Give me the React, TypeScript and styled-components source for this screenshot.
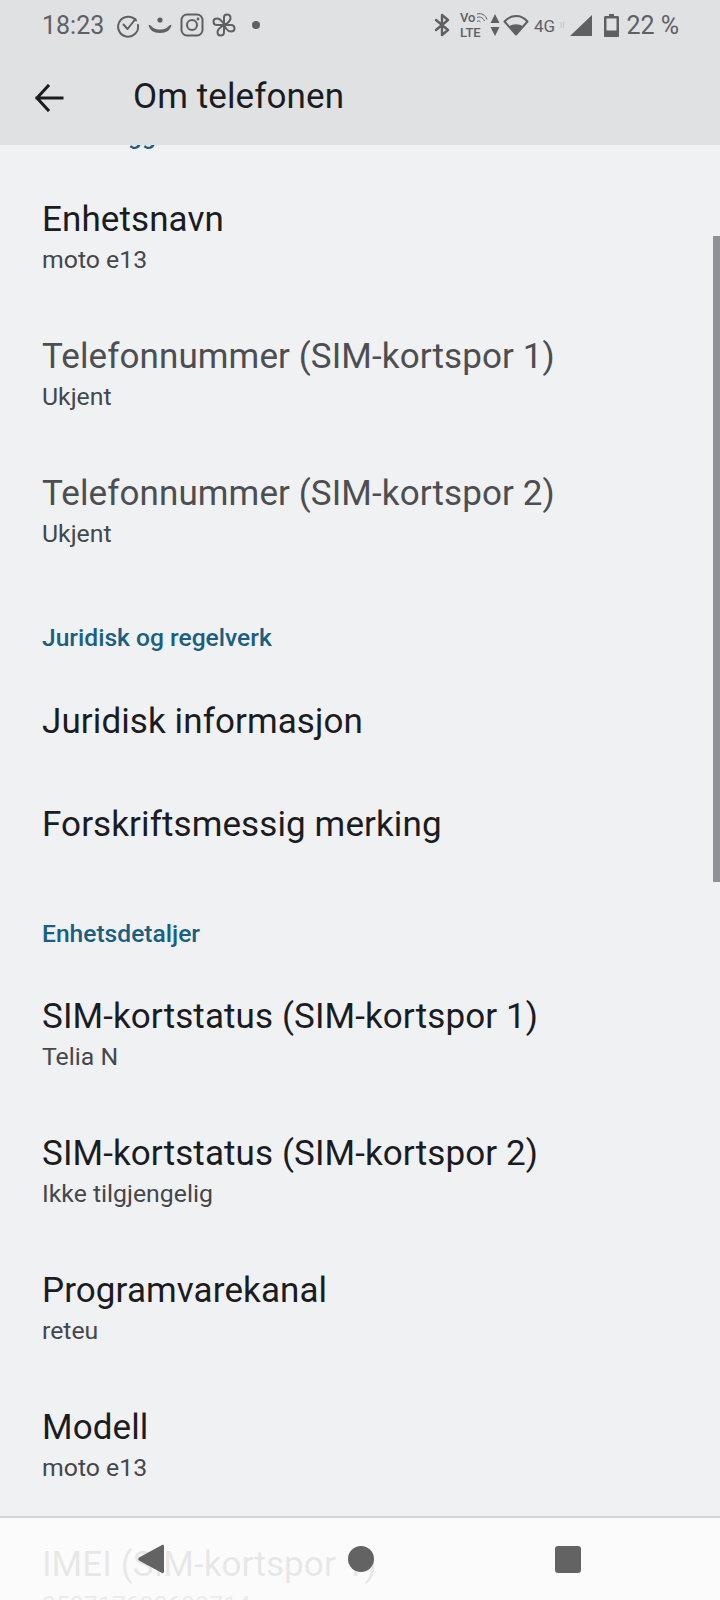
import React from 'react';
import styled, { createGlobalStyle } from 'styled-components';

const GlobalStyle = createGlobalStyle`
  html, body {
    margin: 0;
    padding: 0;
    background: #f0f1f3;
  }
  body {
    font-family: Roboto, "Liberation Sans", sans-serif;
  }
`;

const SPage = styled.div`
  position: relative;
  width: 720px;
  height: 1600px;
  display: flex;
  flex-direction: column;
  overflow: hidden;
  background: #f0f1f3;
`;

const SHeader = styled.header`
  height: 145px;
  flex: none;
  background: #e0e1e3;
  display: flex;
  flex-direction: column;
  position: relative;
  z-index: 1;
`;

const SStatusBar = styled.div`
  height: 50px;
  flex: none;
  padding: 0 41px 0 42px;
  display: flex;
  align-items: center;
  justify-content: space-between;
  color: #5f6063;
`;

const SStatusGroup = styled.div`
  display: flex;
  align-items: center;
`;

const STime = styled.span`
  font-size: 25px;
  margin-right: 11px;
`;

const SPercent = styled.span`
  font-size: 25px;
  margin-left: 7px;
`;

const SToolbar = styled.div`
  flex: 1;
  display: flex;
  align-items: center;
  padding-left: 34px;
`;

const STitle = styled.h1`
  margin: 0 0 2px 69px;
  font-size: 35px;
  letter-spacing: 0.1px;
  font-weight: 400;
  color: #1b1c1f;
`;

const SScroller = styled.main`
  flex: 1;
  overflow: hidden;
`;

const SList = styled.div`
  margin-top: -23px;
`;

const SCategory = styled.div<{ $first?: boolean }>`
  height: 28px;
  line-height: 28px;
  margin: ${({ $first }) => ($first ? '0 0 19px' : '44px 0 18px')} 42px;
  font-size: 24.6px;
  font-weight: 500;
  color: #1a5f82;
`;

const SRow = styled.div<{ $plain?: boolean }>`
  height: ${({ $plain }) => ($plain ? '103px' : '137px')};
  padding-left: 42px;
  display: flex;
  flex-direction: column;
  justify-content: center;
`;

const SRowTitle = styled.div<{ $muted?: boolean }>`
  font-size: 35px;
  letter-spacing: 0.1px;
  line-height: 44px;
  color: ${({ $muted }) => ($muted ? '#4c4e52' : '#1b1c1f')};
`;

const SRowValue = styled.div`
  font-size: 24.8px;
  line-height: 35px;
  color: #44474b;
`;

const SScrollThumb = styled.div`
  position: absolute;
  top: 236px;
  right: 0;
  width: 7px;
  height: 646px;
  background: #8f9194;
`;

const SNavBar = styled.nav`
  position: absolute;
  left: 0;
  right: 0;
  bottom: 0;
  height: 82px;
  border-top: 2px solid #d3d4d6;
  background: rgba(252, 252, 252, 0.91);
  display: flex;
  align-items: center;
  padding-left: 138px;
  z-index: 2;
`;

const SNavBack = styled.svg`
  width: 26px;
  height: 30px;
  fill: #636363;
`;

const SNavHome = styled.span`
  width: 26px;
  height: 26px;
  margin-left: 184px;
  border-radius: 50%;
  background: #636363;
`;

const SNavRecent = styled.span`
  width: 26px;
  height: 27px;
  margin-left: 181px;
  border-radius: 3px;
  background: #636363;
`;

const SIcon = styled.svg<{ $width: number; $gap?: number }>`
  width: ${({ $width }) => $width}px;
  height: 24px;
  margin-right: ${({ $gap }) => $gap ?? 0}px;
  flex: none;
  overflow: visible;
`;

const stroke = {
  fill: 'none',
  stroke: '#5f6063',
  strokeWidth: 2,
  strokeLinecap: 'round',
  strokeLinejoin: 'round',
} as const;

const rows = {
  top: [
    { title: 'Enhetsnavn', value: 'moto e13' },
    { title: 'Telefonnummer (SIM-kortspor 1)', value: 'Ukjent', muted: true },
    { title: 'Telefonnummer (SIM-kortspor 2)', value: 'Ukjent', muted: true },
  ],
  legal: ['Juridisk informasjon', 'Forskriftsmessig merking'],
  details: [
    { title: 'SIM-kortstatus (SIM-kortspor 1)', value: 'Telia N' },
    { title: 'SIM-kortstatus (SIM-kortspor 2)', value: 'Ikke tilgjengelig' },
    { title: 'Programvarekanal', value: 'reteu' },
    { title: 'Modell', value: 'moto e13' },
    { title: 'IMEI (SIM-kortspor 1)', value: '350717680699714' },
  ],
};

const NotificationIcons = () => (
  <>
    <SIcon $width={24} $gap={7} viewBox="0 0 24 24" style={{ marginLeft: 1 }}>
      <path {...stroke} d="M20 7.500A10 10 0 1 0 22 12" />
      <path {...stroke} d="M7.500 11.500l4 4.500 8-10" />
    </SIcon>
    <SIcon $width={26} $gap={7} viewBox="0 0 25 24">
      <circle cx="12.500" cy="7" r="2.600" fill="#5f6063" />
      <path d="M1 12c3 0 3 2 5 3 4 2 9 2 13 0 2-1 2-3 5-3-1 5-5 8-11.500 8S2 17 1 12z" fill="#5f6063" />
    </SIcon>
    <SIcon $width={24} $gap={8} viewBox="0 0 24 24">
      <rect {...stroke} x="1.500" y="1.500" width="21" height="21" rx="5.500" />
      <circle {...stroke} cx="12" cy="12" r="5" />
      <circle cx="18" cy="6" r="1.400" fill="#5f6063" />
    </SIcon>
    <SIcon $width={24} $gap={15} viewBox="0 0 24 24">
      <path
        {...stroke}
        d="M12 11V4.500C12 2.500 13.500 1.500 15 1.500c2 0 3.500 1.500 3.500 3.500S17 9 15 10.500L12 12h7c2 0 3.500 1.500 3.500 3.500S21 18.500 19 18.500c-2 0-3.500-1-5-3L12 12v7c0 2-1.500 3.500-3.500 3.500S5.500 21 5.500 19c0-2 1.500-3.500 3.500-5L12 12H5C3 12 1.500 10.500 1.500 8.500S3 5.500 5 5.500c2 0 3.500 1 5 3z"
      />
    </SIcon>
    <SIcon $width={10} viewBox="0 0 10 24">
      <circle cx="5" cy="12" r="4" fill="#5f6063" />
    </SIcon>
  </>
);

const SystemIcons = () => (
  <>
    <SIcon $width={16} $gap={10} viewBox="0 0 16 24">
      <path {...stroke} strokeWidth={2.400} d="M2 7l12 10-6 5V2l6 5L2 17" />
    </SIcon>
    <SIcon $width={28} $gap={2} viewBox="0 0 28 26" style={{ height: 26 }}>
      <text x="0" y="10" fontSize="13" fontWeight="500" fontFamily="Roboto" fill="#5f6063">Vo</text>
      <text x="0" y="24.500" fontSize="13" fontWeight="500" fontFamily="Roboto" fill="#5f6063">LTE</text>
      <path d="M17 9.500c1.200-1 2.500-.8 3.500.5M17 5.500c3-1.300 6 0 7.500 3.500M17 2c4.500-1.300 8.500 1 10 5.500" fill="none" stroke="#5f6063" strokeWidth="1" />
    </SIcon>
    <SIcon $width={10} $gap={3} viewBox="0 0 10 24">
      <path d="M5 1l4.500 9H.500zM5 23L.500 14h9z" fill="#5f6063" />
    </SIcon>
    <SIcon $width={26} $gap={5} viewBox="0 0 26 24">
      <path {...stroke} d="M13 21.500L1.500 8.500C5 4.500 9 3 13 3s8 1.500 11.500 5.500z" />
      <path d="M13 22L6 13.500c4-3 10-3 14 0z" fill="#5f6063" />
    </SIcon>
    <SIcon $width={22} $gap={3} viewBox="0 0 22 24">
      <text x="0" y="19" fontSize="17" fontFamily="Roboto" fill="#5f6063">4G</text>
    </SIcon>
    <SIcon $width={6} $gap={5} viewBox="0 0 6 24">
      <path d="M2 9v6M4.500 9v6" stroke="#c9cacc" strokeWidth="1.200" />
    </SIcon>
    <SIcon $width={22} $gap={12} viewBox="0 0 22 24">
      <path d="M22 2v21H0z" fill="#5f6063" />
    </SIcon>
    <SIcon $width={15} viewBox="0 0 15 24">
      <path d="M5 1h5v2h3.500c.8 0 1.500.7 1.500 1.500V23c0 .6-.4 1-1 1H1c-.6 0-1-.4-1-1V4.500C0 3.700.7 3 1.500 3H5z" fill="#5f6063" />
      <rect x="2.500" y="5.500" width="10" height="12" fill="#e0e1e3" />
    </SIcon>
  </>
);

const BackArrow = () => (
  <svg width="30" height="28" viewBox="0 0 30 28" fill="none" stroke="#1b1c1f" strokeWidth="3" strokeLinecap="square">
    <path d="M3 14h25M14 2L3 14l11 12" />
  </svg>
);

const Row = ({ title, value, muted }: { title: string; value?: string; muted?: boolean }) => (
  <SRow $plain={!value}>
    <SRowTitle $muted={muted}>{title}</SRowTitle>
    {value && <SRowValue>{value}</SRowValue>}
  </SRow>
);

export default function App() {
  return (
    <SPage>
      <GlobalStyle />
      <SHeader>
        <SStatusBar>
          <SStatusGroup>
            <STime>18:23</STime>
            <NotificationIcons />
          </SStatusGroup>
          <SStatusGroup>
            <SystemIcons />
            <SPercent>22 %</SPercent>
          </SStatusGroup>
        </SStatusBar>
        <SToolbar>
          <BackArrow />
          <STitle>Om telefonen</STitle>
        </SToolbar>
      </SHeader>
      <SScroller>
        <SList>
          <SCategory $first>Grunnleggende info</SCategory>
          {rows.top.map((row) => (
            <Row key={row.title} {...row} />
          ))}
          <SCategory>Juridisk og regelverk</SCategory>
          {rows.legal.map((title) => (
            <Row key={title} title={title} />
          ))}
          <SCategory>Enhetsdetaljer</SCategory>
          {rows.details.map((row) => (
            <Row key={row.title} {...row} />
          ))}
        </SList>
      </SScroller>
      <SScrollThumb />
      <SNavBar>
        <SNavBack viewBox="0 0 26 30">
          <path d="M24 1c1-.5 2 0 2 1.500v25c0 1.500-1 2-2 1.500L1 16.500c-1-.8-1-2 0-3z" />
        </SNavBack>
        <SNavHome />
        <SNavRecent />
      </SNavBar>
    </SPage>
  );
}
